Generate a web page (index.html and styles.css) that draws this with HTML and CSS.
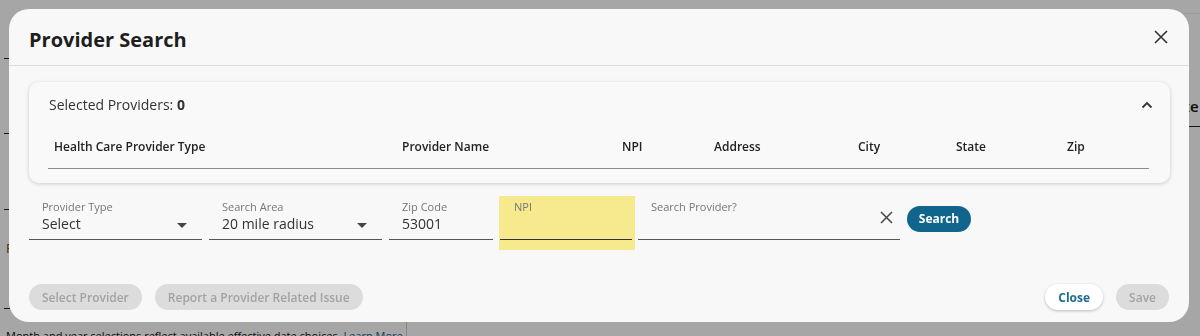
FILE: index.html
```html
<!DOCTYPE html>
<html lang="en">
<head>
    <meta charset="UTF-8">
    <title>Provider Search</title>
    <link rel="stylesheet" href="styles.css">
</head>
<body>
    <div class="page">
        <div class="page-grid">
            <div class="page-left">
                <div class="page-row r1"></div>
                <div class="page-row r2"></div>
                <div class="page-row r3"></div>
                <div class="page-row r4"><span class="page-f">F</span></div>
            </div>
            <div class="page-right">
                <div class="page-right-head">te</div>
            </div>
        </div>
        <div class="page-bottom">
            <p class="page-note">Month and year selections reflect available effective date choices. <a href="#">Learn More</a></p>
        </div>
    </div>

    <div class="overlay">
        <div class="modal">
            <div class="modal-header">
                <h1>Provider Search</h1>
                <button class="icon-btn" aria-label="Close">
                    <svg width="14" height="14" viewBox="0 0 14 14"><path d="M1 1L13 13M13 1L1 13" stroke="#333" stroke-width="1.6" fill="none"/></svg>
                </button>
            </div>

            <div class="modal-body">
                <div class="card">
                    <div class="card-head">
                        <span>Selected Providers: <b>0</b></span>
                        <svg width="12" height="8" viewBox="0 0 12 8"><path d="M1.5 6.5L6 2L10.5 6.5" stroke="#333" stroke-width="1.8" fill="none"/></svg>
                    </div>
                    <table class="providers">
                        <thead>
                            <tr>
                                <th class="c-type">Health Care Provider Type</th>
                                <th class="c-name">Provider Name</th>
                                <th class="c-npi">NPI</th>
                                <th class="c-addr">Address</th>
                                <th class="c-city">City</th>
                                <th class="c-state">State</th>
                                <th class="c-zip">Zip</th>
                            </tr>
                        </thead>
                    </table>
                </div>

                <div class="search-row">
                    <div class="field w-type">
                        <div class="field-inner">
                            <label>Provider Type</label>
                            <div class="value">Select <span class="caret"></span></div>
                        </div>
                    </div>
                    <div class="field w-area">
                        <div class="field-inner">
                            <label>Search Area</label>
                            <div class="value">20 mile radius <span class="caret"></span></div>
                        </div>
                    </div>
                    <div class="field w-zip">
                        <div class="field-inner">
                            <label>Zip Code</label>
                            <div class="value">53001</div>
                        </div>
                    </div>
                    <div class="field w-npi highlight">
                        <div class="field-inner dark">
                            <label>NPI</label>
                            <div class="value"></div>
                        </div>
                    </div>
                    <div class="field w-search">
                        <div class="field-inner">
                            <label>Search Provider?</label>
                            <div class="value">
                                <svg class="clear" width="13" height="13" viewBox="0 0 13 13"><path d="M1 1L12 12M12 1L1 12" stroke="#444" stroke-width="1.5" fill="none"/></svg>
                            </div>
                        </div>
                    </div>
                    <button class="btn btn-primary">Search</button>
                </div>
            </div>

            <div class="modal-footer">
                <div class="btn-group">
                    <button class="btn btn-disabled">Select Provider</button>
                    <button class="btn btn-disabled">Report a Provider Related Issue</button>
                </div>
                <div class="btn-group">
                    <button class="btn btn-light">Close</button>
                    <button class="btn btn-disabled">Save</button>
                </div>
            </div>
        </div>
    </div>
</body>
</html>
```

FILE: styles.css
```css
:root {
    --primary-color: #10658c;
    --text-color: #2b2b2b;
    --label-color: #777;
    --modal-bg: #f8f8f8;
    --disabled-bg: #dcdcdc;
    --disabled-text: #a3a3a3;
    --npi-yellow: #f7e98e;
}

* {
    box-sizing: border-box;
}

body {
    margin: 0;
    font-family: 'Open Sans', 'Liberation Sans', sans-serif;
    color: var(--text-color);
    background: #fff;
    width: 1200px;
    height: 336px;
    overflow: hidden;
}

/* page behind the dialog */
.page-grid {
    display: grid;
    grid-template-columns: 1190px 1fr;
    height: 322px;
}

.page-row {
    width: 6px;
    margin-left: 4px;
    border-bottom: 1px solid #222;
}

.r1 { height: 59px; }
.r2 { height: 75px; }
.r3 { height: 76px; }
.r4 { height: 99px; }

.page-f {
    display: block;
    padding-top: 30px;
    margin-left: 2px;
    font-size: 13px;
    line-height: 16px;
    color: #6b4a10;
}

.page-right-head {
    margin-top: 13px;
    border-top: 1px solid #eee;
    height: 114px;
    padding-top: 82px;
    font-size: 15px;
    font-weight: 600;
    color: #111;
    border-bottom: 1px solid #222;
    margin-left: -6px;
}

.page-bottom {
    width: 407px;
    border-right: 1px solid #ccc;
    height: 14px;
}

.page-note {
    margin: 0 0 0 6px;
    padding-top: 6px;
    font-size: 11px;
    line-height: 16px;
    color: #111;
    white-space: nowrap;
}

.page-note a {
    color: #1a5f8a;
    text-decoration: none;
}

/* overlay + dialog */
.overlay {
    position: fixed;
    inset: 0;
    background: rgba(0, 0, 0, 0.35);
    padding: 9px;
}

.modal {
    width: 1180px;
    height: 313px;
    background: var(--modal-bg);
    border-radius: 20px;
    display: flex;
    flex-direction: column;
}

.modal-header {
    height: 57px;
    padding: 18px 20px 0;
    border-bottom: 1px solid #ddd;
    display: flex;
    justify-content: space-between;
    align-items: flex-start;
}

h1 {
    margin: 0;
    font-size: 20px;
    line-height: 26px;
    font-weight: 700;
    color: #1e1e1e;
}

.icon-btn {
    background: none;
    border: none;
    padding: 0;
    margin-top: 3px;
    margin-right: 1px;
    cursor: pointer;
}

.modal-body {
    padding: 16px 19px 0 20px;
}

.card {
    background: #f9f9f9;
    border-radius: 10px;
    box-shadow: 0 1px 4px rgba(0, 0, 0, 0.18);
    padding: 0 20px 14px;
}

.card-head {
    height: 44px;
    display: flex;
    justify-content: space-between;
    align-items: center;
    font-size: 14px;
    color: #333;
    padding-top: 1px;
}

.card-head b {
    font-weight: 700;
}

.card-head svg {
    margin-right: -3px;
}

.providers {
    width: 100%;
    border-collapse: collapse;
    margin-left: -1px;
}

.providers th {
    text-align: left;
    font-size: 12px;
    font-weight: 600;
    color: #222;
    height: 42px;
    padding: 0 0 0 6px;
    border-bottom: 1px solid #8c8c8c;
}

.c-type { width: 348px; }
.c-name { width: 220px; }
.c-npi { width: 92px; }
.c-addr { width: 144px; }
.c-city { width: 98px; }
.c-state { width: 111px; }

/* search fields */
.search-row {
    display: flex;
    align-items: flex-start;
    margin-top: 13px;
}

.field {
    height: 54px;
    padding-bottom: 10px;
    margin-right: 7px;
}

.field-inner {
    border-bottom: 1px solid #555;
    padding: 4px 13px 0;
    height: 44px;
}

.field-inner.dark {
    border-bottom-color: #333;
}

.field label {
    display: block;
    font-size: 11px;
    line-height: 13px;
    color: var(--label-color);
}

.field .value {
    position: relative;
    margin-top: 1px;
    font-size: 14px;
    line-height: 20px;
    height: 20px;
    color: #333;
}

.caret {
    position: absolute;
    right: 2px;
    top: 9px;
    border-left: 5px solid transparent;
    border-right: 5px solid transparent;
    border-top: 5px solid #444;
}

.clear {
    position: absolute;
    right: -6px;
    top: -3px;
}

.w-type { width: 173px; }
.w-area { width: 173px; }
.w-zip { width: 104px; margin-right: 6px; }
.w-npi { width: 136px; margin-right: 3px; }
.w-search { width: 262px; }

.highlight {
    background: var(--npi-yellow);
}

.highlight .field-inner {
    margin-left: 1px;
    margin-right: 3px;
    padding-left: 14px;
}

.btn {
    font-family: inherit;
    height: 26px;
    border-radius: 13px;
    border: none;
    padding: 0 13px;
    font-size: 12px;
    font-weight: 600;
    cursor: pointer;
}

.btn-primary {
    margin-top: 10px;
    background: var(--primary-color);
    color: #fff;
    width: 64px;
    padding: 0;
    font-weight: 700;
}

.btn-disabled {
    background: var(--disabled-bg);
    color: var(--disabled-text);
    cursor: default;
}

.btn-light {
    background: #fff;
    color: #1c6c91;
    font-weight: 700;
    box-shadow: 0 1px 3px rgba(0, 0, 0, 0.25);
}

.modal-footer {
    margin-top: auto;
    padding: 0 20px 12px;
    display: flex;
    justify-content: space-between;
}

.btn-group {
    display: flex;
    gap: 13px;
}
```
